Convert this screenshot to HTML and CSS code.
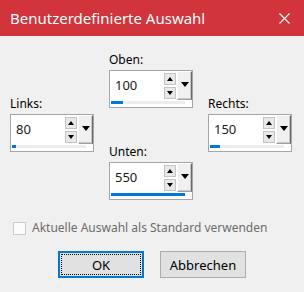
FILE: index.html
```html
<!DOCTYPE html>
<html lang="de">
<head>
    <meta charset="UTF-8">
    <title>Benutzerdefinierte Auswahl</title>
    <link rel="stylesheet" href="styles.css">
</head>
<body>
    <div class="dialog">
        <div class="titlebar">
            <span class="title">Benutzerdefinierte Auswahl</span>
            <svg class="close" width="11" height="11" viewBox="0 0 11 11">
                <path d="M0.5 0.5 L10.5 10.5 M10.5 0.5 L0.5 10.5" stroke="#fff" stroke-width="1.1" fill="none"/>
            </svg>
        </div>

        <div class="content">
            <div class="fields">
                <div class="field oben">
                    <label>Oben:</label>
                    <div class="spinbox">
                        <div class="row">
                            <span class="value">100</span>
                            <div class="spin">
                                <span class="sbtn"><i class="up"></i></span>
                                <span class="sbtn"><i class="down"></i></span>
                            </div>
                            <span class="drop"><i class="down big"></i></span>
                        </div>
                        <div class="track"><div class="bar" style="width: 12px"></div></div>
                    </div>
                </div>

                <div class="field links">
                    <label>Links:</label>
                    <div class="spinbox">
                        <div class="row">
                            <span class="value">80</span>
                            <div class="spin">
                                <span class="sbtn"><i class="up"></i></span>
                                <span class="sbtn"><i class="down"></i></span>
                            </div>
                            <span class="drop"><i class="down big"></i></span>
                        </div>
                        <div class="track"><div class="bar" style="width: 4px"></div></div>
                    </div>
                </div>

                <div class="field rechts">
                    <label>Rechts:</label>
                    <div class="spinbox">
                        <div class="row">
                            <span class="value">150</span>
                            <div class="spin">
                                <span class="sbtn"><i class="up"></i></span>
                                <span class="sbtn"><i class="down"></i></span>
                            </div>
                            <span class="drop"><i class="down big"></i></span>
                        </div>
                        <div class="track"><div class="bar" style="width: 10px"></div></div>
                    </div>
                </div>

                <div class="field unten">
                    <label>Unten:</label>
                    <div class="spinbox">
                        <div class="row">
                            <span class="value">550</span>
                            <div class="spin">
                                <span class="sbtn"><i class="up"></i></span>
                                <span class="sbtn"><i class="down"></i></span>
                            </div>
                            <span class="drop"><i class="down big"></i></span>
                        </div>
                        <div class="track"><div class="bar" style="width: 74px"></div></div>
                    </div>
                </div>
            </div>

            <label class="check"><span class="checkbox"></span>Aktuelle Auswahl als Standard verwenden</label>

            <div class="buttons">
                <button class="btn default"><span class="focus">OK</span></button>
                <button class="btn">Abbrechen</button>
            </div>
        </div>
    </div>
</body>
</html>
```

FILE: styles.css
```css
body {
    margin: 0;
    padding: 0;
    font-family: "Noto Sans", "Open Sans", sans-serif;
    font-size: 12px;
    color: #000;
    background-color: #f0f0f0;
}
.dialog {
    width: 304px;
    height: 292px;
    background-color: #f0f0f0;
}
.titlebar {
    height: 36px;
    background-color: #d1343a;
    color: #fff;
    display: flex;
    align-items: center;
    justify-content: space-between;
    padding: 0 14px 0 10px;
}
.title {
    font-size: 15px;
}
.close {
    display: block;
}
.content {
    padding: 16px 0 0 10px;
}
.fields {
    display: grid;
    grid-template-columns: 84px 84px 84px;
    grid-template-rows: 44px 48px 56px;
    column-gap: 15px;
}
.field {
    align-self: start;
    display: flex;
    flex-direction: column;
}
.field label {
    line-height: 16px;
    height: 16px;
    margin-bottom: 2px;
}
.oben {
    grid-column: 2;
    grid-row: 1 / 3;
}
.links {
    grid-column: 1;
    grid-row: 2 / 4;
}
.rechts {
    grid-column: 3;
    grid-row: 2 / 4;
}
.unten {
    grid-column: 2;
    grid-row: 3;
}
.spinbox {
    box-sizing: border-box;
    width: 84px;
    height: 38px;
    border: 1px solid #a6a6a6;
    background-color: #fff;
    display: flex;
    flex-direction: column;
}
.spinbox .row {
    display: flex;
    height: 29px;
}
.value {
    flex: 1;
    padding-left: 5px;
    font-size: 13px;
    line-height: 29px;
    color: #1a1a1a;
}
.spin {
    display: flex;
    flex-direction: column;
    gap: 2px;
    padding-top: 2px;
    margin-right: 1px;
}
.sbtn {
    box-sizing: border-box;
    width: 12px;
    height: 12px;
    border: 1px solid #c4c4c4;
    background-color: #e8e8e8;
    display: flex;
    align-items: center;
    justify-content: center;
}
.drop {
    box-sizing: border-box;
    width: 15px;
    height: 29px;
    background-color: #f0f0f0;
    border-top: 1px solid #fff;
    border-left: 1px solid #fff;
    border-right: 1px solid #696969;
    border-bottom: 1px solid #a0a0a0;
    box-shadow: inset -1px -1px 0 #c8c8c8;
    display: flex;
    align-items: center;
    justify-content: center;
    padding-bottom: 2px;
}
i {
    display: block;
    width: 0;
    height: 0;
}
i.up {
    border-left: 3px solid transparent;
    border-right: 3px solid transparent;
    border-bottom: 4px solid #000;
}
i.down {
    border-left: 3px solid transparent;
    border-right: 3px solid transparent;
    border-top: 4px solid #000;
}
i.down.big {
    border-left-width: 4px;
    border-right-width: 4px;
    border-top-width: 5px;
}
.track {
    margin: 1px 0 0 1px;
    width: 74px;
    height: 3px;
    background-color: #ececec;
}
.bar {
    height: 3px;
    background-color: #0078d7;
}
.check {
    display: flex;
    align-items: center;
    gap: 6px;
    margin: 20px 0 0 3px;
    line-height: 16px;
    color: #6d6d6d;
}
.checkbox {
    box-sizing: border-box;
    width: 13px;
    height: 13px;
    border: 1px solid #cccccc;
    background-color: #fcfcfc;
}
.buttons {
    display: flex;
    justify-content: center;
    gap: 16px;
    margin: 15px 0 0 -10px;
}
.btn {
    box-sizing: border-box;
    width: 86px;
    height: 27px;
    padding: 0;
    font-family: inherit;
    font-size: 13px;
    color: #000;
    background-color: #e1e1e1;
    border: 1px solid #adadad;
}
.btn.default {
    border: 2px solid #0078d7;
    padding: 1px;
}
.focus {
    display: flex;
    align-items: center;
    justify-content: center;
    height: 100%;
    box-sizing: border-box;
    border: 1px dotted #000;
}
```
